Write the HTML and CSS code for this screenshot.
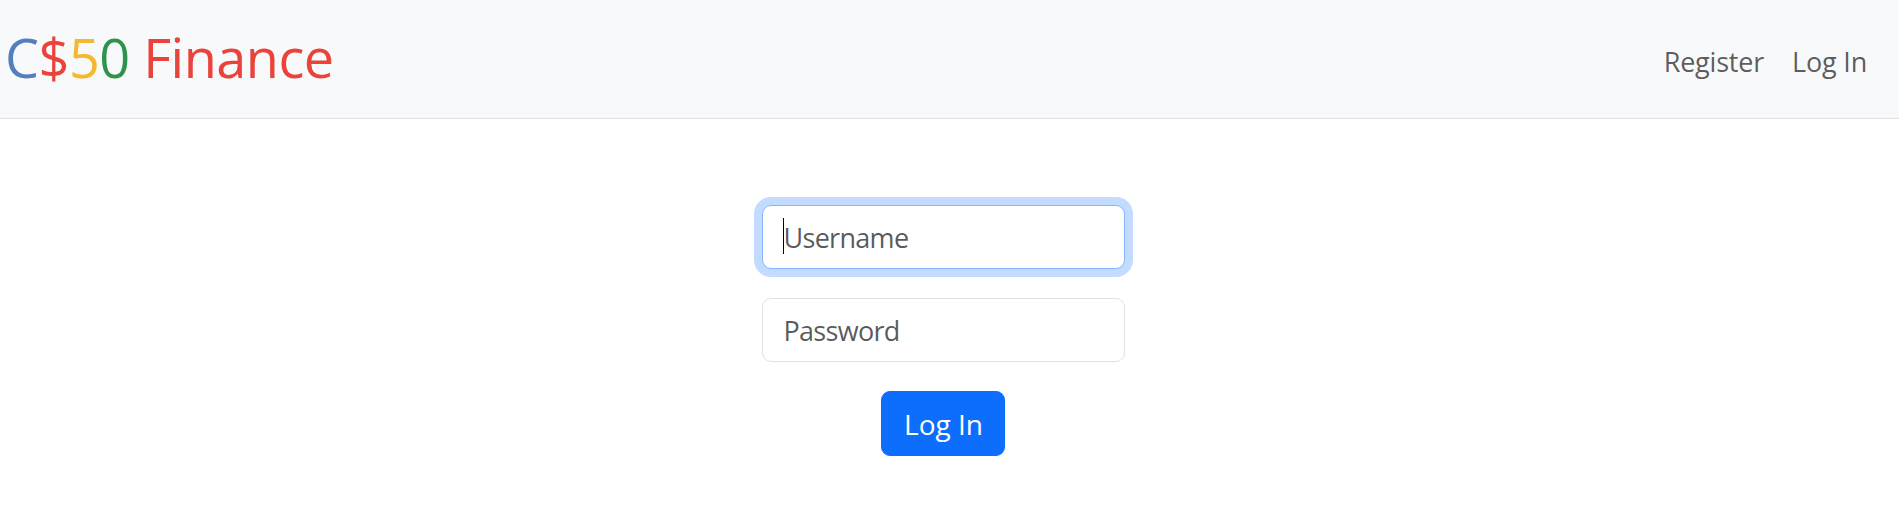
FILE: index.html
```html
<!DOCTYPE html>
<html lang="en">
<head>
<meta charset="utf-8">
<title>C$50 Finance: Log In</title>
<link rel="stylesheet" href="styles.css">
</head>
<body>
<nav class="navbar">
  <a class="brand" href="#"><span class="blue">C</span><span class="red">$</span><span class="yellow">5</span><span class="green">0</span> <span class="red">Finance</span></a>
  <ul class="nav-links">
    <li><a class="nav-link" href="#">Register</a></li>
    <li><a class="nav-link" href="#">Log In</a></li>
  </ul>
</nav>
<main class="main">
  <form class="login-form" action="#">
    <div class="field focused">
      <input class="form-control" type="text" name="username" placeholder="Username" autocomplete="off">
    </div>
    <div class="field">
      <input class="form-control" type="password" name="password" placeholder="Password">
    </div>
    <button class="btn-primary" type="submit">Log In</button>
  </form>
</main>
</body>
</html>
```
FILE: styles.css
```css
html, body {
  margin: 0;
  padding: 0;
  background: #fff;
}
body {
  font-family: "Open Sans", "Noto Sans", "Liberation Sans", sans-serif;
  color: #212529;
}
.navbar {
  height: 118px;
  background: #f8f9fa;
  border-bottom: 1px solid #dee2e6;
  display: flex;
  align-items: center;
  justify-content: space-between;
  padding: 0 18px 0 5px;
}
.brand {
  font-size: 54px;
  line-height: 1;
  text-decoration: none;
  letter-spacing: -0.5px;
  padding-bottom: 4px;
}
.blue { color: #537fbe; }
.red { color: #ea433b; }
.yellow { color: #f5b82e; }
.green { color: #2e944b; }
.nav-links {
  list-style: none;
  margin: 0;
  padding: 6px 0 0 0;
  display: flex;
}
.nav-link {
  display: block;
  padding: 8px 14px;
  font-size: 27px;
  line-height: 1.5;
  letter-spacing: -0.2px;
  color: rgba(0, 0, 0, 0.65);
  text-decoration: none;
}
.main {
  padding: 86px 13px 0 0;
}
.login-form {
  display: flex;
  flex-direction: column;
  align-items: center;
}
.field {
  position: relative;
  margin-bottom: 29px;
}
.form-control {
  box-sizing: border-box;
  width: 363px;
  height: 64px;
  padding: 0 21px;
  font-family: inherit;
  font-size: 27px;
  letter-spacing: -0.7px;
  color: #212529;
  background: #fff;
  border: 1px solid #dee2e6;
  border-radius: 9px;
  outline: none;
  display: block;
}
.form-control::placeholder {
  color: rgba(33, 37, 41, 0.75);
}
.focused .form-control {
  border-color: #86b7fe;
  box-shadow: 0 0 0 8px #c2dbfe;
}
.focused::before {
  content: "";
  position: absolute;
  left: 21px;
  top: 13px;
  width: 1px;
  height: 36px;
  background: #000;
}
.btn-primary {
  box-sizing: border-box;
  height: 65px;
  padding: 0 21px 0 22px;
  font-family: inherit;
  font-size: 28px;
  color: #fff;
  background: #0d6efd;
  border: 1px solid #0d6efd;
  border-radius: 9px;
}
```
